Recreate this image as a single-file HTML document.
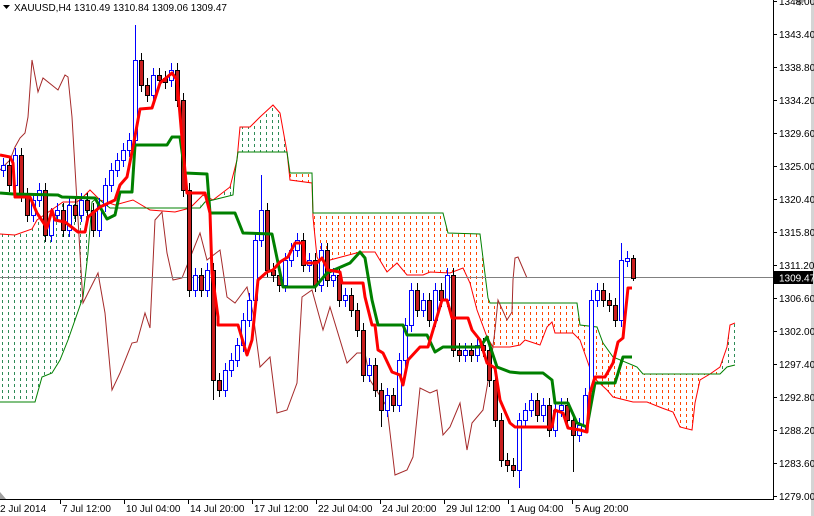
<!DOCTYPE html>
<html><head><meta charset="utf-8"><style>
html,body{margin:0;padding:0;background:#fff;}
body{width:814px;height:516px;overflow:hidden;position:relative;font-family:"Liberation Sans",sans-serif;}
svg{position:absolute;left:0;top:0;}
</style></head><body>
<svg width="814" height="516" viewBox="0 0 814 516" xmlns="http://www.w3.org/2000/svg">
<defs>
<pattern id="pg" width="6" height="6" patternUnits="userSpaceOnUse"><rect x="2" y="0" width="1" height="3" fill="#2e8b57"/></pattern>
<pattern id="po" width="6" height="6" patternUnits="userSpaceOnUse"><rect x="2" y="0" width="1" height="3" fill="#ff4500"/></pattern>
</defs>
<rect x="0" y="0" width="814" height="516" fill="#fff"/>
<rect x="811" y="0" width="3" height="516" fill="#d4d4d4"/>

<polygon fill="url(#pg)" points="0,234 15,235 32,229 37,220 47,213 63,202 77,202 83,197 90,190 92,202 88,253 83,297 75,320 68,340 60,360 52,373 42,377 35,402 0,402"/>
<polygon fill="url(#pg)" points="203,195 213,200 230,187 237,160 240,127 250,127 260,117 273,105 280,113 287,152 283,152 260,152 238,152 235,173 233,195 205,202 200,208"/>
<polygon fill="url(#po)" points="287,152 290,173 312,173 313,213 443,213 448,233 480,234 488,298 490,303 577,303 580,325 597,327 603,343 613,357 637,367 643,374 720,374 720,367 710,374 700,380 695,403 692,430 680,427 673,412 662,408 647,402 633,402 613,397 607,390 593,377 580,340 573,333 555,333 552,322 547,327 540,345 525,340 520,345 510,347 493,347 487,337 477,310 470,283 463,268 450,273 430,272 423,275 407,275 397,263 387,272 375,252 360,252 330,260 320,263 317,257 313,217 312,183 290,180"/>
<polygon fill="url(#pg)" points="720,367 727,347 730,325 735,323 735,365 727,367 720,374"/>

<polyline fill="none" stroke="#ff0000" stroke-width="1" points="0,234 15,235 32,229 37,220 47,213 63,202 77,202 83,197 90,190 100,200 115,205 133,200 150,210 175,212 190,208 203,195 213,200 230,187 237,160 240,127 250,127 260,117 273,105 280,113 287,152 290,180 312,183 313,217 317,257 320,263 330,260 360,252 375,252 387,272 397,263 407,275 423,275 430,272 450,273 463,268 470,283 477,310 487,337 493,347 510,347 520,345 525,340 540,345 547,327 552,322 555,333 573,333 580,340 593,377 607,390 613,397 633,402 647,402 662,408 673,412 680,427 692,430 695,403 700,380 710,374 720,367 727,347 730,325 735,323"/>
<polyline fill="none" stroke="#008000" stroke-width="1" points="0,402 35,402 42,377 52,373 60,360 68,340 75,320 83,297 88,253 92,202 97,198 110,208 200,208 205,202 233,195 235,173 238,152 283,152 287,152 290,173 312,173 313,213 443,213 448,233 480,234 488,298 490,303 577,303 580,325 597,327 603,343 613,357 637,367 643,374 720,374 727,367 735,365"/>

<polyline fill="none" stroke="#a52a2a" stroke-width="1" points="0,170 10,160 15,147 20,138 25,133 28,117 32,60 38,92 43,78 58,90 65,75 68,77 72,117 80,253 83,303 98,273 105,313 112,390 120,373 132,343 137,342 145,313 150,328 155,220 162,212 167,253 173,280 182,278 200,233 207,260 220,250 227,297 235,303 247,287 253,313 260,367 270,357 277,413 287,410 297,383 302,297 312,290 323,330 330,307 347,363 357,353 365,353 370,380 387,407 395,475 407,470 413,457 420,388 430,393 437,390 443,435 450,427 460,403 467,450 472,423 483,410 490,370 495,330 498,300 507,320 512,312 513,280 515,258 518,257 527,278"/>

<line x1="0" y1="277.5" x2="773" y2="277.5" stroke="#808080" stroke-width="1"/>

<g stroke="#0000ff" stroke-width="1" fill="#fff">
<path fill="none" d="M3.5 158V177M15.5 148V192M33.5 193V222M39.5 183V207M51.5 208V242M57.5 203V222M69.5 198V237M81.5 193V222M99.5 198V237M105.5 178V212M111.5 163V192M117.5 153V177M123.5 143V167M129.5 133V157M135.5 25V147M153.5 68V102M171.5 63V87M195.5 268V297M207.5 263V297M225.5 363V397M231.5 353V377M237.5 338V367M243.5 313V352M249.5 293V327M255.5 233V307M261.5 175V247M285.5 253V292M291.5 243V267M297.5 233V257M309.5 253V272M321.5 243V292M333.5 268V287M345.5 288V307M369.5 358V382M387.5 388V417M399.5 353V412M405.5 318V367M411.5 283V332M423.5 293V317M435.5 283V327M447.5 268V307M465.5 343V362M477.5 338V362M519.5 413V488M525.5 403V427M531.5 393V417M543.5 398V422M555.5 403V437M561.5 398V417M579.5 418V442M585.5 388V432M591.5 290V402M597.5 283V307M621.5 243V327M627.5 251V267"/>
<rect x="1.5" y="165.5" width="4" height="5"/><rect x="13.5" y="155.5" width="4" height="30"/><rect x="31.5" y="200.5" width="4" height="15"/><rect x="37.5" y="190.5" width="4" height="10"/><rect x="49.5" y="215.5" width="4" height="20"/><rect x="55.5" y="210.5" width="4" height="5"/><rect x="67.5" y="205.5" width="4" height="25"/><rect x="79.5" y="200.5" width="4" height="15"/><rect x="97.5" y="205.5" width="4" height="25"/><rect x="103.5" y="185.5" width="4" height="20"/><rect x="109.5" y="170.5" width="4" height="15"/><rect x="115.5" y="160.5" width="4" height="10"/><rect x="121.5" y="150.5" width="4" height="10"/><rect x="127.5" y="140.5" width="4" height="10"/><rect x="133.5" y="60.5" width="4" height="80"/><rect x="151.5" y="75.5" width="4" height="20"/><rect x="169.5" y="70.5" width="4" height="10"/><rect x="193.5" y="275.5" width="4" height="15"/><rect x="205.5" y="270.5" width="4" height="20"/><rect x="223.5" y="370.5" width="4" height="20"/><rect x="229.5" y="360.5" width="4" height="10"/><rect x="235.5" y="345.5" width="4" height="15"/><rect x="241.5" y="320.5" width="4" height="25"/><rect x="247.5" y="300.5" width="4" height="20"/><rect x="253.5" y="240.5" width="4" height="60"/><rect x="259.5" y="210.5" width="4" height="30"/><rect x="283.5" y="260.5" width="4" height="25"/><rect x="289.5" y="250.5" width="4" height="10"/><rect x="295.5" y="240.5" width="4" height="10"/><rect x="307.5" y="260.5" width="4" height="5"/><rect x="319.5" y="250.5" width="4" height="35"/><rect x="331.5" y="275.5" width="4" height="5"/><rect x="343.5" y="295.5" width="4" height="5"/><rect x="367.5" y="365.5" width="4" height="10"/><rect x="385.5" y="395.5" width="4" height="15"/><rect x="397.5" y="360.5" width="4" height="45"/><rect x="403.5" y="325.5" width="4" height="35"/><rect x="409.5" y="290.5" width="4" height="35"/><rect x="421.5" y="300.5" width="4" height="10"/><rect x="433.5" y="290.5" width="4" height="30"/><rect x="445.5" y="275.5" width="4" height="25"/><rect x="463.5" y="350.5" width="4" height="5"/><rect x="475.5" y="345.5" width="4" height="10"/><rect x="517.5" y="420.5" width="4" height="50"/><rect x="523.5" y="410.5" width="4" height="10"/><rect x="529.5" y="400.5" width="4" height="10"/><rect x="541.5" y="405.5" width="4" height="10"/><rect x="553.5" y="410.5" width="4" height="20"/><rect x="559.5" y="405.5" width="4" height="5"/><rect x="577.5" y="425.5" width="4" height="10"/><rect x="583.5" y="395.5" width="4" height="30"/><rect x="589.5" y="300.5" width="4" height="95"/><rect x="595.5" y="290.5" width="4" height="10"/><rect x="619.5" y="260.5" width="4" height="60"/><rect x="625.5" y="258.5" width="4" height="3"/>
</g>
<g stroke="#000" stroke-width="1" fill="#c81e1e">
<path fill="none" d="M9.5 158V192M21.5 148V202M27.5 188V222M45.5 183V242M63.5 203V237M75.5 198V222M87.5 193V217M93.5 203V237M141.5 53V92M147.5 78V102M159.5 68V87M165.5 71V89M177.5 63V107M183.5 93V197M189.5 183V297M201.5 268V297M213.5 263V400M219.5 373V397M267.5 203V277M273.5 263V282M279.5 268V292M303.5 233V272M315.5 253V292M327.5 243V287M339.5 268V307M351.5 288V317M357.5 303V337M363.5 323V382M375.5 358V397M381.5 383V427M393.5 388V412M417.5 283V317M429.5 293V327M441.5 283V307M453.5 268V357M459.5 343V362M471.5 343V362M483.5 338V357M489.5 343V387M495.5 373V427M501.5 413V467M507.5 453V472M513.5 458V477M537.5 393V422M549.5 398V437M567.5 398V427M573.5 413V472M603.5 283V307M609.5 293V312M615.5 298V327M633.5 255V281"/>
<rect x="7.5" y="165.5" width="4" height="20"/><rect x="19.5" y="155.5" width="4" height="40"/><rect x="25.5" y="195.5" width="4" height="20"/><rect x="43.5" y="190.5" width="4" height="45"/><rect x="61.5" y="210.5" width="4" height="20"/><rect x="73.5" y="205.5" width="4" height="10"/><rect x="85.5" y="200.5" width="4" height="10"/><rect x="91.5" y="210.5" width="4" height="20"/><rect x="139.5" y="60.5" width="4" height="25"/><rect x="145.5" y="85.5" width="4" height="10"/><rect x="157.5" y="75.5" width="4" height="5"/><rect x="163.5" y="78.5" width="4" height="4"/><rect x="175.5" y="70.5" width="4" height="30"/><rect x="181.5" y="100.5" width="4" height="90"/><rect x="187.5" y="190.5" width="4" height="100"/><rect x="199.5" y="275.5" width="4" height="15"/><rect x="211.5" y="270.5" width="4" height="110"/><rect x="217.5" y="380.5" width="4" height="10"/><rect x="265.5" y="210.5" width="4" height="60"/><rect x="271.5" y="270.5" width="4" height="5"/><rect x="277.5" y="275.5" width="4" height="10"/><rect x="301.5" y="240.5" width="4" height="25"/><rect x="313.5" y="260.5" width="4" height="25"/><rect x="325.5" y="250.5" width="4" height="30"/><rect x="337.5" y="275.5" width="4" height="25"/><rect x="349.5" y="295.5" width="4" height="15"/><rect x="355.5" y="310.5" width="4" height="20"/><rect x="361.5" y="330.5" width="4" height="45"/><rect x="373.5" y="365.5" width="4" height="25"/><rect x="379.5" y="390.5" width="4" height="20"/><rect x="391.5" y="395.5" width="4" height="10"/><rect x="415.5" y="290.5" width="4" height="20"/><rect x="427.5" y="300.5" width="4" height="20"/><rect x="439.5" y="290.5" width="4" height="10"/><rect x="451.5" y="275.5" width="4" height="75"/><rect x="457.5" y="350.5" width="4" height="5"/><rect x="469.5" y="350.5" width="4" height="5"/><rect x="481.5" y="345.5" width="4" height="5"/><rect x="487.5" y="350.5" width="4" height="30"/><rect x="493.5" y="380.5" width="4" height="40"/><rect x="499.5" y="420.5" width="4" height="40"/><rect x="505.5" y="460.5" width="4" height="5"/><rect x="511.5" y="465.5" width="4" height="5"/><rect x="535.5" y="400.5" width="4" height="15"/><rect x="547.5" y="405.5" width="4" height="25"/><rect x="565.5" y="405.5" width="4" height="15"/><rect x="571.5" y="420.5" width="4" height="15"/><rect x="601.5" y="290.5" width="4" height="10"/><rect x="607.5" y="300.5" width="4" height="5"/><rect x="613.5" y="305.5" width="4" height="15"/><rect x="631.5" y="258.5" width="4" height="20"/>
</g>

<polyline fill="none" stroke="#008000" stroke-width="3" stroke-linejoin="round" points="0,193 13,194 58,195 62,197 95,198 100,207 107,219 115,215 120,192 132,192 135,145 167,145 172,137 180,137 185,173 207,174 210,213 235,213 243,233 272,234 283,287 315,287 327,273 350,263 360,252 365,258 372,300 378,325 403,325 407,335 427,335 435,352 443,347 480,347 487,337 497,367 510,372 520,373 543,373 552,380 555,403 568,403 577,423 587,427 595,383 615,383 623,357 632,357"/>
<polyline fill="none" stroke="#ff0000" stroke-width="3" stroke-linejoin="round" points="0,155 10,157 13,163 15,197 30,197 37,213 47,228 52,210 55,220 65,222 78,232 85,232 88,217 100,207 115,200 120,185 127,177 133,147 140,109 152,108 160,83 172,73 177,80 182,138 187,193 205,193 210,213 212,273 218,317 218,325 238,325 247,355 252,340 258,280 267,272 273,270 280,262 288,257 295,243 303,243 305,263 317,263 322,258 328,270 340,272 342,283 363,283 365,297 372,325 375,325 378,350 383,353 392,372 400,375 403,385 408,360 420,347 428,347 442,300 447,300 452,318 468,318 472,330 480,340 487,363 495,368 500,400 510,423 515,427 552,427 555,410 563,413 568,428 580,430 587,432 590,393 595,377 605,377 613,363 618,342 623,338 625,317 628,288 632,288"/>

<line x1="773.5" y1="0" x2="773.5" y2="500" stroke="#000" stroke-width="1"/>
<line x1="0" y1="499.5" x2="774" y2="499.5" stroke="#000" stroke-width="1"/>
<polygon points="795,0 805,0 800,6" fill="#a0a0a0"/>
<polygon points="0,492 0,499 6,499" fill="#a0a0a0"/>
<g stroke="#000" stroke-width="1">
<path d="M773 1.5h4M773 34.5h4M773 67.5h4M773 100.5h4M773 133.5h4M773 166.5h4M773 199.5h4M773 232.5h4M773 265.5h4M773 298.5h4M773 331.5h4M773 364.5h4M773 397.5h4M773 430.5h4M773 463.5h4M773 496.5h4"/>
<path d="M60.5 500v4M124.5 500v4M188.5 500v4M252.5 500v4M316.5 500v4M380.5 500v4M444.5 500v4M508.5 500v4M572.5 500v4"/>
</g>
<g font-family="Liberation Sans, sans-serif" font-size="10" fill="#000">
<text x="779" y="5">1348.00</text>
<text x="779" y="38">1343.40</text>
<text x="779" y="71">1338.80</text>
<text x="779" y="104">1334.20</text>
<text x="779" y="137">1329.60</text>
<text x="779" y="170">1325.00</text>
<text x="779" y="203">1320.40</text>
<text x="779" y="236">1315.80</text>
<text x="779" y="269">1311.20</text>
<text x="779" y="302">1306.60</text>
<text x="779" y="335">1302.00</text>
<text x="779" y="368">1297.40</text>
<text x="779" y="401">1292.80</text>
<text x="779" y="434">1288.20</text>
<text x="779" y="467">1283.60</text>
<text x="779" y="500">1279.00</text>
</g>
<rect x="774" y="271" width="39" height="13" fill="#000"/>
<text x="779" y="281.5" font-family="Liberation Sans, sans-serif" font-size="10" fill="#fff">1309.47</text>
<g font-family="Liberation Sans, sans-serif" font-size="10" fill="#000">
<text x="0" y="512">2 Jul 2014</text>
<text x="62" y="512">7 Jul 12:00</text>
<text x="126" y="512">10 Jul 04:00</text>
<text x="190" y="512">14 Jul 20:00</text>
<text x="254" y="512">17 Jul 12:00</text>
<text x="318" y="512">22 Jul 04:00</text>
<text x="382" y="512">24 Jul 20:00</text>
<text x="446" y="512">29 Jul 12:00</text>
<text x="510" y="512">1 Aug 04:00</text>
<text x="575" y="512">5 Aug 20:00</text>
</g>
<polygon points="3,5 10,5 6.5,9" fill="#000"/>
<text x="14" y="11" font-family="Liberation Sans, sans-serif" font-size="10" fill="#000">XAUUSD,H4  1310.49 1310.84 1309.06 1309.47</text>
</svg>
</body></html>
